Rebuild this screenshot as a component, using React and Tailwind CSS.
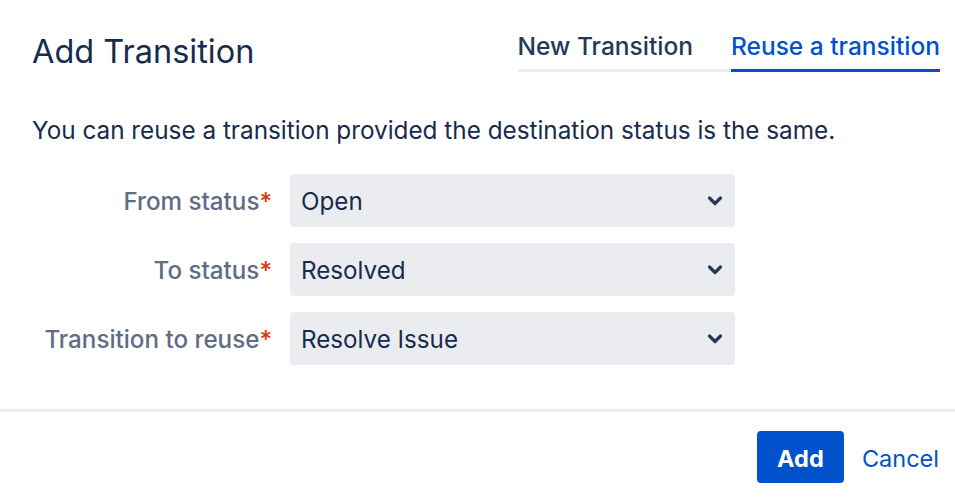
const rows = [
  { label: "From status", value: "Open" },
  { label: "To status", value: "Resolved" },
  { label: "Transition to reuse", value: "Resolve Issue" },
];

const Chevron = () => (
  <svg width="16" height="16" viewBox="0 0 16 16" className="text-[#253858]">
    <path
      d="M2.5 5 L8 10.5 L13.5 5"
      fill="none"
      stroke="currentColor"
      strokeWidth="3.2"
      strokeLinecap="round"
      strokeLinejoin="round"
    />
  </svg>
);

const App = () => {
  return (
    <main
      className="h-[497px] w-[955px] overflow-hidden bg-white text-[#172b4d]"
      style={{ fontFamily: "Inter, 'Noto Sans', sans-serif" }}
    >
      <header className="flex items-start justify-between pl-8 pr-[15px] pt-[31px]">
        <h1 className="mt-[1px] text-[32.5px] leading-[40px] font-normal">Add Transition</h1>
        <nav className="flex gap-[38px] border-b-[3px] border-[#ebecf0]">
          <button className="pb-[8px] text-[24.5px] font-medium leading-[30px] text-[#253858]">
            New Transition
          </button>
          <button className="-mb-[3px] border-b-[3px] border-[#0052cc] pb-[8px] text-[24.5px] font-medium leading-[30px] text-[#0052cc]">
            Reuse a transition
          </button>
        </nav>
      </header>

      <p className="mt-[43px] px-8 text-[24.3px] leading-[30px]">
        You can reuse a transition provided the destination status is the same.
      </p>

      <div className="mt-[29px] flex flex-col gap-4 pb-[44px]">
        {rows.map((row) => (
          <div key={row.label} className="flex items-center">
            <label className="w-[272px] pt-[3px] text-right text-[24.2px] font-medium text-[#5e6c84]">
              {row.label}
              <span className="text-[#de350b]">*</span>
            </label>
            <div className="ml-[18px] flex h-[53px] w-[445px] items-center justify-between rounded-[4px] bg-[#ebecf0] pl-[11px] pr-[12px] text-[24.2px]">
              <span className="pt-[3px]">{row.value}</span>
              <Chevron />
            </div>
          </div>
        ))}
      </div>

      <footer className="flex items-center justify-end gap-[18px] border-t-[3px] border-[#ebecf0] pr-[16px] pt-[19px]">
        <button className="h-[52px] w-[87px] rounded-[4px] bg-[#0052cc] pt-[3px] text-[23.5px] font-bold text-white">
          Add
        </button>
        <button className="pt-[3px] text-[23.5px] text-[#0052cc]">Cancel</button>
      </footer>
    </main>
  );
};

export default App;
